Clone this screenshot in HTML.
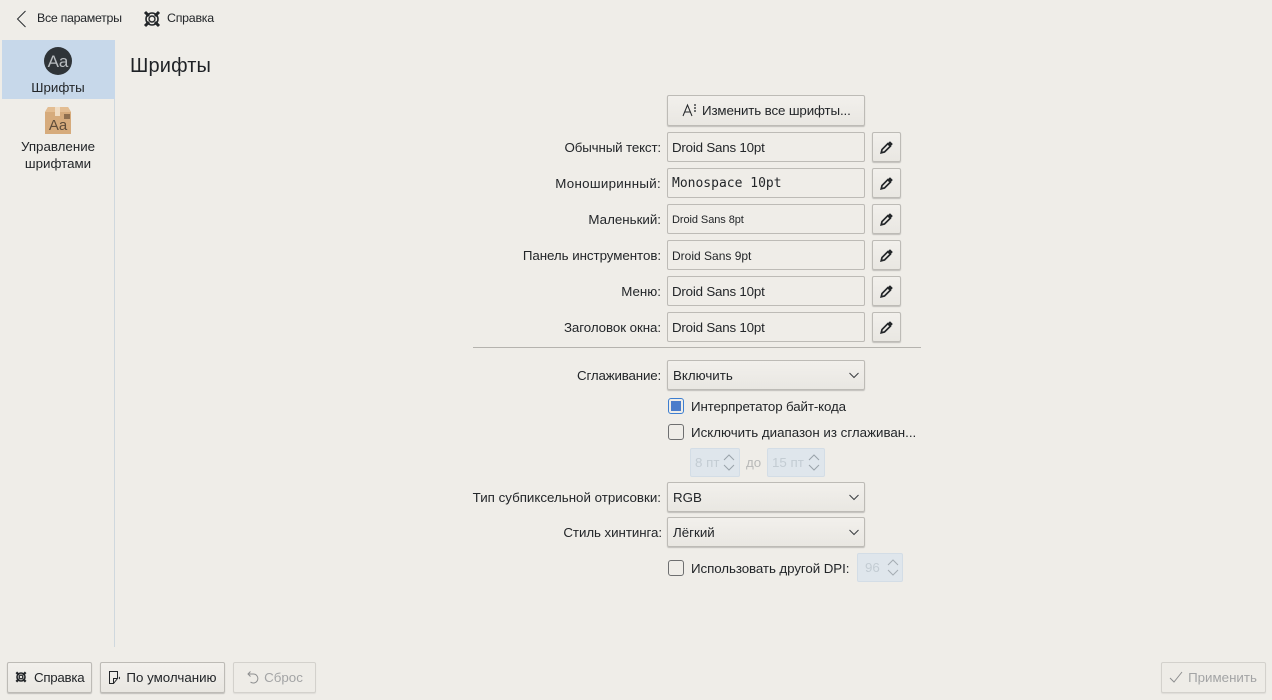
<!DOCTYPE html>
<html lang="ru">
<head>
<meta charset="utf-8">
<title>Шрифты</title>
<style>
html,body{margin:0;padding:0;width:1272px;height:700px;overflow:hidden;background:#efede8}
body{position:relative;font-family:"Liberation Sans","DejaVu Sans",sans-serif;font-size:13.33px;color:#232629}
.a{position:absolute;white-space:nowrap}
.lbl{position:absolute;right:611px;white-space:nowrap;line-height:18px;height:18px}
.field{position:absolute;left:667px;height:28px;border:1px solid #bdbbb6;border-radius:2px;background:#efede8;line-height:30px;padding-left:4px;box-sizing:content-box;width:192px;white-space:nowrap}
.btn{position:absolute;box-sizing:border-box;border:1px solid #bdbbb6;border-radius:2px;background:linear-gradient(#f2f0ec,#e9e7e2);box-shadow:0 1px 1px rgba(0,0,0,.2);text-align:center;white-space:nowrap}
.pen{left:872px;width:29px;height:30px}
.pen svg{position:absolute;left:6px;top:7px}
.combo{position:absolute;left:667px;width:198px;height:30px;box-sizing:border-box;border:1px solid #bdbbb6;border-radius:2px;background:linear-gradient(#f2f0ec,#e9e7e2);box-shadow:0 1px 1px rgba(0,0,0,.2);line-height:30px;padding-left:5px}
.combo svg{position:absolute;right:3px;top:10px}
.chk{position:absolute;left:668px;width:16px;height:16px;box-sizing:border-box;border:1px solid #6e6f70;border-radius:3px;background:#efede8}
.spin{position:absolute;box-sizing:border-box;height:29px;border:1px solid #d3dde6;border-radius:2px;background:#dfe6ec;color:#c3ccd3;line-height:28px;padding-left:4px}
.spin svg{position:absolute;top:5px}
.dis{border-color:#d3d1cc;background:#eeece7;box-shadow:0 1px 1px rgba(0,0,0,.07);color:#a3a4a5}
</style>
</head>
<body>

<!-- top bar -->
<svg class="a" style="left:15px;top:10px" width="14" height="18" viewBox="0 0 14 18"><path d="M10.500 1 L2.500 9 L10.500 17" fill="none" stroke="#2a2d30" stroke-width="1"/></svg>
<div class="a" style="left:37px;top:10px;line-height:17px;font-size:12.4px;letter-spacing:-.3px">Все параметры</div>
<svg class="a" style="left:143px;top:10px" width="18" height="18" viewBox="0 0 18 18"><g fill="none" stroke="#232629"><circle cx="9" cy="9" r="6" stroke-width="1.600"/><circle cx="9" cy="9" r="3" stroke-width="1.400"/><path d="M2 2l4 4M16 2l-4 4M2 16l4-4M16 16l-4-4" stroke-width="3"/></g></svg>
<div class="a" style="left:167px;top:10px;line-height:17px;font-size:12.4px;letter-spacing:-.25px">Справка</div>

<!-- sidebar -->
<div class="a" style="left:114px;top:40px;width:1px;height:607px;background:#cfd8de"></div>
<div class="a" style="left:2px;top:40px;width:113px;height:59px;background:#c7d8ea"></div>
<svg class="a" style="left:44px;top:47px" width="28" height="28" viewBox="0 0 28 28"><circle cx="14" cy="14" r="14" fill="#2f3438"/><text x="14" y="20" font-family="Liberation Sans,sans-serif" font-size="17" fill="#b9bdc0" text-anchor="middle">Aa</text></svg>
<div class="a" style="left:2px;width:112px;top:79px;line-height:17px;text-align:center">Шрифты</div>
<svg class="a" style="left:44px;top:106px" width="28" height="29" viewBox="0 0 28 29"><path d="M4 1h20l3 5v22H1V6z" fill="#d6ab7c"/><path d="M1 6l3-5h20l3 5z" fill="#e3bd92"/><rect x="11" y="1" width="5" height="9" fill="#f0dcc3"/><rect x="20" y="8" width="6" height="5" fill="#8f6f4f"/><text x="14" y="24" font-family="Liberation Sans,sans-serif" font-size="15" fill="#5f4c39" text-anchor="middle">Aa</text></svg>
<div class="a" style="left:2px;width:112px;top:138px;line-height:17px;text-align:center;white-space:normal">Управление<br>шрифтами</div>

<!-- title -->
<div class="a" style="left:130px;top:52px;font-size:20px;line-height:28px;color:#1f2226;letter-spacing:.15px">Шрифты</div>

<!-- change all -->
<div class="btn" style="left:667px;top:95px;width:198px;height:31px"></div>
<div class="a" style="left:702px;top:102px;line-height:18px;letter-spacing:-.13px">Изменить все шрифты...</div>
<svg class="a" style="left:682px;top:103px" width="15" height="15" viewBox="0 0 15 15"><path d="M1 13 L5.500 2 L10 13 M3 9h5" fill="none" stroke="#232629" stroke-width="1"/><path d="M12 2h2M12 5h2M12 8h2" stroke="#232629" stroke-width="1.300"/></svg>

<!-- font rows -->
<div class="lbl" style="top:139px;letter-spacing:-.14px">Обычный текст:</div>
<div class="field" style="top:132px;letter-spacing:-.2px">Droid Sans 10pt</div>
<div class="btn pen" style="top:132px"><svg width="15" height="15" viewBox="0 0 15 15"><path d="M2.200 12.800l.8-3.300 5.800-5.800 2.500 2.500-5.800 5.800z" fill="none" stroke="#232629" stroke-width="1.700"/><path d="M8.500 3.500l2.500-2.300 2.800 2.800-2.300 2.500z" fill="#232629"/></svg></div>

<div class="lbl" style="top:175px;letter-spacing:.3px">Моноширинный:</div>
<div class="field" style="top:168px;font-family:'DejaVu Sans Mono','Liberation Mono',monospace;font-size:13px">Monospace 10pt</div>
<div class="btn pen" style="top:168px"><svg width="15" height="15" viewBox="0 0 15 15"><path d="M2.200 12.800l.8-3.300 5.800-5.800 2.500 2.500-5.800 5.800z" fill="none" stroke="#232629" stroke-width="1.700"/><path d="M8.500 3.500l2.500-2.300 2.800 2.800-2.300 2.500z" fill="#232629"/></svg></div>

<div class="lbl" style="top:211px">Маленький:</div>
<div class="field" style="top:204px;font-size:11px;letter-spacing:-.07px">Droid Sans 8pt</div>
<div class="btn pen" style="top:204px"><svg width="15" height="15" viewBox="0 0 15 15"><path d="M2.200 12.800l.8-3.300 5.800-5.800 2.500 2.500-5.800 5.800z" fill="none" stroke="#232629" stroke-width="1.700"/><path d="M8.500 3.500l2.500-2.300 2.800 2.800-2.300 2.500z" fill="#232629"/></svg></div>

<div class="lbl" style="top:247px;letter-spacing:-.05px">Панель инструментов:</div>
<div class="field" style="top:240px;font-size:12px">Droid Sans 9pt</div>
<div class="btn pen" style="top:240px"><svg width="15" height="15" viewBox="0 0 15 15"><path d="M2.200 12.800l.8-3.300 5.800-5.800 2.500 2.500-5.800 5.800z" fill="none" stroke="#232629" stroke-width="1.700"/><path d="M8.500 3.500l2.500-2.300 2.800 2.800-2.300 2.500z" fill="#232629"/></svg></div>

<div class="lbl" style="top:283px">Меню:</div>
<div class="field" style="top:276px;letter-spacing:-.2px">Droid Sans 10pt</div>
<div class="btn pen" style="top:276px"><svg width="15" height="15" viewBox="0 0 15 15"><path d="M2.200 12.800l.8-3.300 5.800-5.800 2.500 2.500-5.800 5.800z" fill="none" stroke="#232629" stroke-width="1.700"/><path d="M8.500 3.500l2.500-2.300 2.800 2.800-2.300 2.500z" fill="#232629"/></svg></div>

<div class="lbl" style="top:319px;letter-spacing:-.07px">Заголовок окна:</div>
<div class="field" style="top:312px;letter-spacing:-.2px">Droid Sans 10pt</div>
<div class="btn pen" style="top:312px"><svg width="15" height="15" viewBox="0 0 15 15"><path d="M2.200 12.800l.8-3.300 5.800-5.800 2.500 2.500-5.800 5.800z" fill="none" stroke="#232629" stroke-width="1.700"/><path d="M8.500 3.500l2.500-2.300 2.800 2.800-2.300 2.500z" fill="#232629"/></svg></div>

<div class="a" style="left:473px;top:347px;width:448px;height:1px;background:#b5b3ae"></div>

<!-- antialiasing -->
<div class="lbl" style="top:367px;letter-spacing:-.17px">Сглаживание:</div>
<div class="combo" style="top:360px">Включить<svg width="14" height="9" viewBox="0 0 14 9"><path d="M2.500 2l4.500 4.500L11.500 2" fill="none" stroke="#3a3d40" stroke-width="1"/></svg></div>

<div class="chk" style="top:398px;border-color:#3d7ed0"><div style="position:absolute;left:2px;top:2px;width:10px;height:10px;background:#4a7ccb"></div></div>
<div class="a" style="left:691px;top:398px;line-height:18px;letter-spacing:-.13px">Интерпретатор байт-кода</div>

<div class="chk" style="top:424px"></div>
<div class="a" style="left:691px;top:424px;line-height:18px">Исключить диапазон из сглаживан...</div>

<div class="spin" style="left:690px;top:448px;width:50px">8 пт<svg style="left:31px" width="14" height="17" viewBox="0 0 14 17"><path d="M2 6l5-5 5 5M2 11l5 5 5-5" fill="none" stroke="#9aa3aa" stroke-width="1"/></svg></div>
<div class="a" style="left:746px;top:454px;line-height:18px;color:#b8b9b8">до</div>
<div class="spin" style="left:767px;top:448px;width:58px">15 пт<svg style="left:39px" width="14" height="17" viewBox="0 0 14 17"><path d="M2 6l5-5 5 5M2 11l5 5 5-5" fill="none" stroke="#9aa3aa" stroke-width="1"/></svg></div>

<div class="lbl" style="top:489px">Тип субпиксельной отрисовки:</div>
<div class="combo" style="top:482px">RGB<svg width="14" height="9" viewBox="0 0 14 9"><path d="M2.500 2l4.500 4.500L11.500 2" fill="none" stroke="#3a3d40" stroke-width="1"/></svg></div>

<div class="lbl" style="top:524px;right:610px;letter-spacing:-.07px">Стиль хинтинга:</div>
<div class="combo" style="top:517px">Лёгкий<svg width="14" height="9" viewBox="0 0 14 9"><path d="M2.500 2l4.500 4.500L11.500 2" fill="none" stroke="#3a3d40" stroke-width="1"/></svg></div>

<div class="chk" style="top:560px"></div>
<div class="a" style="left:691px;top:560px;line-height:18px;letter-spacing:-.08px">Использовать другой DPI:</div>
<div class="spin" style="left:857px;top:553px;width:46px;padding-left:7px">96<svg style="left:28px" width="14" height="17" viewBox="0 0 14 17"><path d="M2 6l5-5 5 5M2 11l5 5 5-5" fill="none" stroke="#a5adb3" stroke-width="1"/></svg></div>

<!-- bottom buttons -->
<div class="btn" style="left:7px;top:662px;width:85px;height:31px"></div>
<div class="a" style="left:34px;top:669px;line-height:18px;letter-spacing:-.28px">Справка</div>
<svg class="a" style="left:15px;top:671px" width="12" height="12" viewBox="0 0 18 18"><g fill="none" stroke="#232629"><circle cx="9" cy="9" r="6" stroke-width="2.400"/><circle cx="9" cy="9" r="2.800" stroke-width="2"/><path d="M2 2l4 4M16 2l-4 4M2 16l4-4M16 16l-4-4" stroke-width="3.400"/></g></svg>

<div class="btn" style="left:100px;top:662px;width:125px;height:31px;line-height:29px;padding-left:18px">По умолчанию</div>
<svg class="a" style="left:108px;top:670px" width="15" height="15" viewBox="0 0 15 15"><path d="M1.500 1.500h8v7l-4 5h-4z M5.500 13.500v-5h4" fill="none" stroke="#232629" stroke-width="1"/><path d="M12 6.500l-1.500 1.500 1.500 1.500z" fill="#232629"/></svg>

<div class="btn dis" style="left:233px;top:662px;width:83px;height:31px;line-height:29px;padding-left:18px">Сброс</div>
<svg class="a" style="left:246px;top:670px" width="14" height="15" viewBox="0 0 14 15"><path d="M4.500 1.500L2 4l2.500 2.500M2 4h5.500a4.500 4.500 0 1 1-3 8" fill="none" stroke="#8d8e8f" stroke-width="1"/></svg>

<div class="btn dis" style="left:1161px;top:662px;width:105px;height:31px;line-height:29px;padding-left:18px">Применить</div>
<svg class="a" style="left:1169px;top:671px" width="14" height="13" viewBox="0 0 14 13"><path d="M1 7l4 4 8-10" fill="none" stroke="#8d8e8f" stroke-width="1"/></svg>

</body>
</html>
